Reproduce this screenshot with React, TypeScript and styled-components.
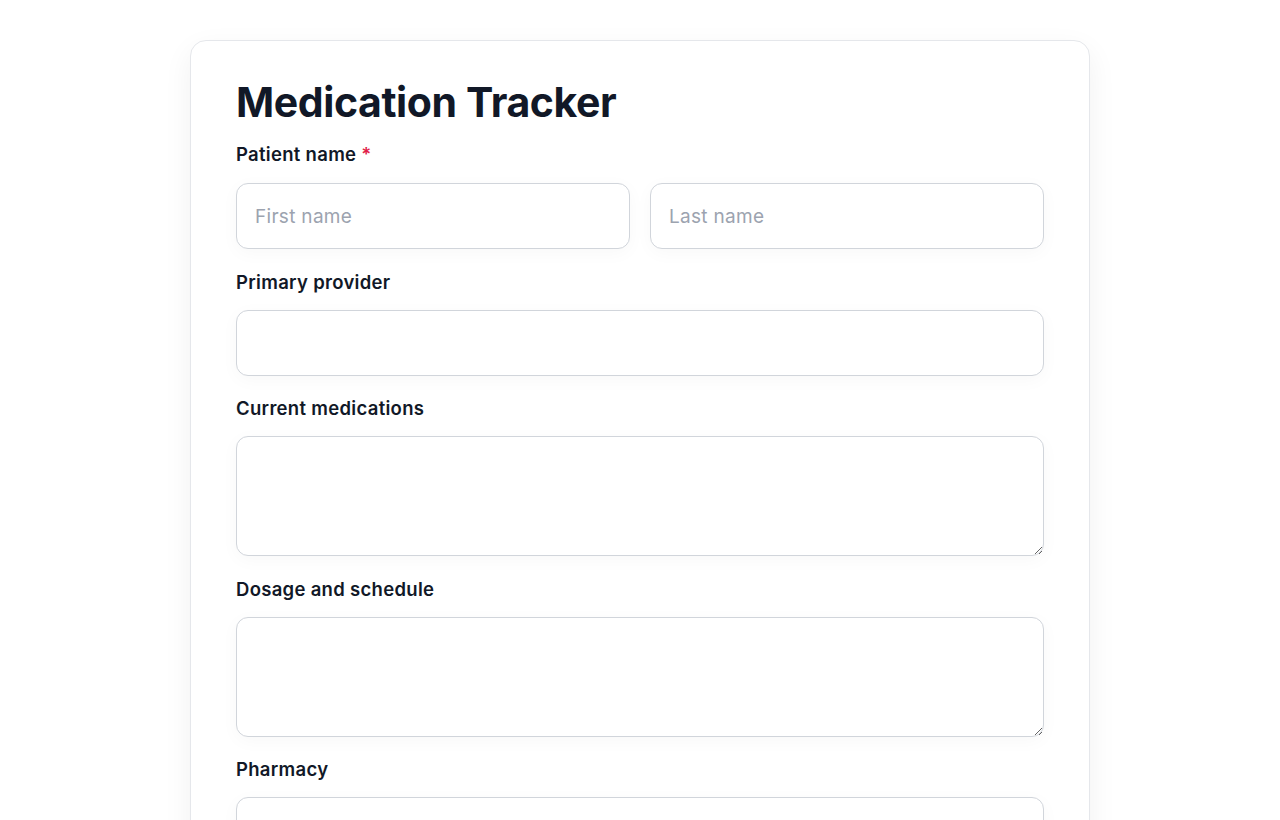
import styled, { createGlobalStyle } from "styled-components";

const GlobalStyle = createGlobalStyle`
  * { box-sizing: border-box; }
  html, body {
    margin: 0;
    padding: 0;
    background: #ffffff;
    font-family: Inter, "Noto Sans", "Liberation Sans", sans-serif;
    color: #111827;
  }
`;

const Page = styled.div`
  display: flex;
  justify-content: center;
  padding-top: 40px;
`;

const Card = styled.form`
  width: 900px;
  background: #ffffff;
  border: 1px solid #e5e7eb;
  border-radius: 16px;
  padding: 34px 45px 40px;
  box-shadow: 0 10px 30px rgba(17, 24, 39, 0.06);
  display: flex;
  flex-direction: column;
`;

const Title = styled.h1`
  margin: 0 0 13px;
  font-size: 41px;
  line-height: 54px;
  font-weight: 700;
  letter-spacing: -0.4px;
  color: #111827;
`;

const Field = styled.div`
  display: flex;
  flex-direction: column;
  margin-bottom: 20.5px;
`;

const Label = styled.label<{ $gap?: number }>`
  font-size: 18.5px;
  line-height: 24px;
  font-weight: 600;
  letter-spacing: 0.3px;
  color: #111827;
  margin-bottom: ${(p) => p.$gap ?? 16}px;
`;

const Required = styled.span`
  color: #e11d48;
  margin-left: 5px;
`;

const Row = styled.div`
  display: grid;
  grid-template-columns: 1fr 1fr;
  gap: 20px;
`;

const inputBase = `
  width: 100%;
  border: 1px solid #d1d5db;
  border-radius: 12px;
  background: #ffffff;
  font-family: Inter, "Noto Sans", "Liberation Sans", sans-serif;
  font-size: 19px;
  letter-spacing: 0.3px;
  color: #111827;
  padding: 0 18px;
  outline: none;
  box-shadow: 0 4px 18px rgba(17, 24, 39, 0.03);
  &::placeholder { color: #9ca3af; }
`;

const Input = styled.input`
  ${inputBase}
  height: 66px;
`;

const TextArea = styled.textarea`
  ${inputBase}
  height: 120px;
  padding: 16px 18px;
  resize: vertical;
  display: block;
`;

export default function App() {
  return (
    <>
      <GlobalStyle />
      <Page>
        <Card>
          <Title>Medication Tracker</Title>
          <Field>
            <Label $gap={17}>
              Patient name<Required>*</Required>
            </Label>
            <Row>
              <Input placeholder="First name" />
              <Input placeholder="Last name" />
            </Row>
          </Field>
          <Field>
            <Label>Primary provider</Label>
            <Input />
          </Field>
          <Field>
            <Label>Current medications</Label>
            <TextArea />
          </Field>
          <Field>
            <Label>Dosage and schedule</Label>
            <TextArea />
          </Field>
          <Field>
            <Label>Pharmacy</Label>
            <Input />
          </Field>
        </Card>
      </Page>
    </>
  );
}
